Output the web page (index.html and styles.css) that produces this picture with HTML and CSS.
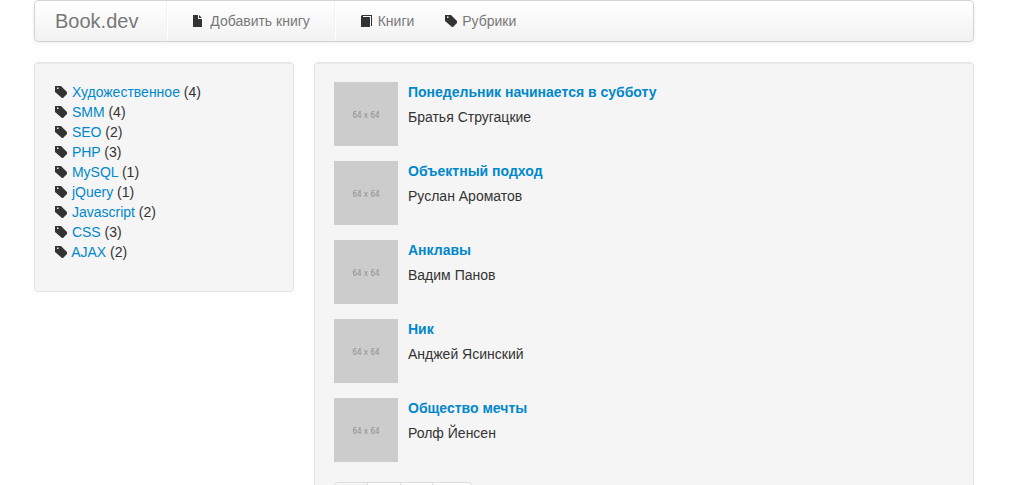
FILE: index.html
```html
<!DOCTYPE html>
<html lang="ru">
<head>
<meta charset="utf-8">
<title>Book.dev</title>
<link rel="stylesheet" href="styles.css">
</head>
<body>
<svg class="sprite" aria-hidden="true">
  <symbol id="tag" viewBox="0 0 14 14"><path fill-rule="evenodd" d="M1 1h6l6 6v2L9 13H8L1 7zM3 2.500v1.500h1.500V2.500z"/></symbol>
  <symbol id="file" viewBox="0 0 14 14"><path d="M1 1h5v4h4v8H1zM7 1l3 3H7z"/></symbol>
  <symbol id="book" viewBox="0 0 14 14"><path d="M2 1h10v11h-1V2H3v1h7v10H1V2z"/></symbol>
</svg>
<div class="container">
  <nav class="navbar">
    <a class="brand" href="#">Book.dev</a>
    <ul class="nav">
      <li class="divider"></li>
      <li><a href="#"><svg class="icon"><use href="#file"/></svg> Добавить книгу</a></li>
      <li class="divider"></li>
      <li><a href="#"><svg class="icon"><use href="#book"/></svg> Книги</a></li>
      <li><a href="#"><svg class="icon"><use href="#tag"/></svg> Рубрики</a></li>
    </ul>
  </nav>
  <div class="row">
    <aside class="well">
      <ul class="rubrics">
        <li><svg class="icon"><use href="#tag"/></svg> <a href="#">Художественное</a> (4)</li>
        <li><svg class="icon"><use href="#tag"/></svg> <a href="#">SMM</a> (4)</li>
        <li><svg class="icon"><use href="#tag"/></svg> <a href="#">SEO</a> (2)</li>
        <li><svg class="icon"><use href="#tag"/></svg> <a href="#">PHP</a> (3)</li>
        <li><svg class="icon"><use href="#tag"/></svg> <a href="#">MySQL</a> (1)</li>
        <li><svg class="icon"><use href="#tag"/></svg> <a href="#">jQuery</a> (1)</li>
        <li><svg class="icon"><use href="#tag"/></svg> <a href="#">Javascript</a> (2)</li>
        <li><svg class="icon"><use href="#tag"/></svg> <a href="#">CSS</a> (3)</li>
        <li><svg class="icon"><use href="#tag"/></svg> <a href="#">AJAX</a> (2)</li>
      </ul>
    </aside>
    <main class="well">
      <div class="books">
        <article class="media"><a class="thumb" href="#">64 x 64</a><div><h4><a href="#">Понедельник начинается в субботу</a></h4>Братья Стругацкие</div></article>
        <article class="media"><a class="thumb" href="#">64 x 64</a><div><h4><a href="#">Объектный подход</a></h4>Руслан Ароматов</div></article>
        <article class="media"><a class="thumb" href="#">64 x 64</a><div><h4><a href="#">Анклавы</a></h4>Вадим Панов</div></article>
        <article class="media"><a class="thumb" href="#">64 x 64</a><div><h4><a href="#">Ник</a></h4>Анджей Ясинский</div></article>
        <article class="media"><a class="thumb" href="#">64 x 64</a><div><h4><a href="#">Общество мечты</a></h4>Ролф Йенсен</div></article>
      </div>
      <ul class="pagination">
        <li><a class="active" href="#">1</a></li>
        <li><a href="#">2</a></li>
        <li><a href="#">3</a></li>
        <li><a href="#">→</a></li>
      </ul>
    </main>
  </div>
</div>
</body>
</html>
```
FILE: styles.css
```css
html {
  scrollbar-width: none;
}
body {
  margin: 0;
  padding-right: 16px;
  background: #fff;
  color: #333;
  font: 14px/20px "Liberation Sans", Arial, sans-serif;
}
ul, h4 {
  margin: 0;
  padding: 0;
  list-style: none;
}
a {
  color: #08c;
  text-decoration: none;
}
a:hover {
  text-decoration: underline;
}
.sprite {
  display: none;
}
.icon {
  width: 14px;
  height: 14px;
  fill: #333;
  vertical-align: text-top;
  margin-top: 1px;
}
.container {
  max-width: 940px;
  margin: 0 auto;
}
.navbar {
  display: flex;
  min-height: 40px;
  margin-bottom: 20px;
  border: 1px solid #d4d4d4;
  border-radius: 4px;
  background: linear-gradient(#fff, #f2f2f2);
  box-shadow: 0 1px 4px rgba(0, 0, 0, 0.065);
}
.navbar a {
  display: block;
  padding: 10px 15px;
  color: #777;
  text-shadow: 0 1px 0 #fff;
}
.navbar .brand {
  padding: 10px 19px 10px 20px;
  font-size: 20px;
}
.nav {
  display: flex;
}
.divider {
  margin: 0 9px;
  border-left: 1px solid #f2f2f2;
  border-right: 1px solid #fff;
}
.row {
  display: grid;
  grid-template-columns: 13fr 33fr;
  gap: 20px;
  align-items: start;
}
.well {
  padding: 19px;
  border: 1px solid #e3e3e3;
  border-radius: 4px;
  background: #f5f5f5;
  box-shadow: inset 0 1px 1px rgba(0, 0, 0, 0.05);
}
.rubrics {
  margin-bottom: 10px;
}
.books {
  display: grid;
  gap: 15px;
}
.media {
  display: flex;
  gap: 10px;
}
.media h4 {
  margin-bottom: 5px;
  font-size: 14px;
}
.thumb {
  display: grid;
  place-items: center;
  flex: none;
  box-sizing: border-box;
  width: 64px;
  height: 64px;
  padding-top: 4px;
  background: #ccc;
  color: #909090;
  font: 8px/12px "DejaVu Sans Condensed", "DejaVu Sans", sans-serif;
}
.pagination {
  display: flex;
  margin: 20px 0;
}
.pagination a {
  display: block;
  padding: 4px 12px;
  border: 1px solid #ddd;
  border-left-width: 0;
  background: #fff;
}
.pagination .active {
  background: #f5f5f5;
  color: #999;
}
.pagination li:first-child a {
  border-left-width: 1px;
  border-radius: 4px 0 0 4px;
}
.pagination li:last-child a {
  border-radius: 0 4px 4px 0;
}
```
